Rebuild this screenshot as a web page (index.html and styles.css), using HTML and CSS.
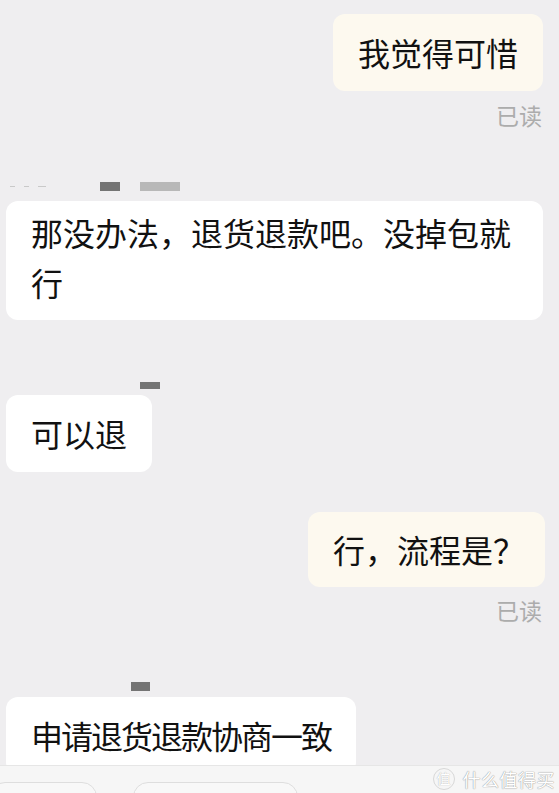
FILE: index.html
```html
<!DOCTYPE html>
<html lang="zh-CN">
<head>
<meta charset="utf-8">
<title>聊天</title>
<link rel="stylesheet" href="styles.css">
</head>
<body>
<div class="screen">
  <main class="chat">
    <div class="bubble bubble-out b1">我觉得可惜</div>
    <div class="read r1">已读</div>

    <div class="name n1">
      <span class="dots"><i></i><i></i><i></i></span>
      <span class="blk dark w20"></span>
      <span class="blk light w40"></span>
    </div>
    <div class="bubble bubble-in b2">那没办法，退货退款吧。没掉包就行</div>

    <div class="name n2"><span class="blk dark w20"></span></div>
    <div class="bubble bubble-in b3">可以退</div>

    <div class="bubble bubble-out b4">行，流程是？</div>
    <div class="read r2">已读</div>

    <div class="name n3"><span class="blk dark w19"></span></div>
    <div class="bubble bubble-in b5">申请退货退款协商一致</div>
  </main>
  <footer class="bar">
    <span class="pill pill-a"></span>
    <span class="pill pill-b"></span>
    <div class="mark"><span class="mark-ic">值</span><span class="mark-tx">什么值得买</span></div>
  </footer>
</div>
</body>
</html>
```

FILE: styles.css
```css
* { box-sizing: border-box; }
html, body { margin: 0; padding: 0; }
body {
  background: #efeef0;
  font-family: "Noto Sans CJK SC", "Noto Sans", sans-serif;
  color: #111;
}
.screen {
  width: 559px;
  height: 793px;
  display: flex;
  flex-direction: column;
  overflow: hidden;
}
.chat {
  flex: 1;
  min-height: 0;
  overflow: hidden;
  display: flex;
  flex-direction: column;
  align-items: flex-start;
}
.bubble {
  font-size: 32px;
  line-height: 49px;
  padding: 14px 25px;
  border-radius: 12px;
}
.bubble-in {
  background: #ffffff;
  margin-left: 6px;
  max-width: 537px;
}
.bubble-out {
  background: #fdf9ef;
  align-self: flex-end;
  margin-right: 16px;
}
.b1 { margin-top: 14px; }
.b2 { margin-top: 10px; line-height: 50px; padding: 6px 25px 13px; width: 537px; }
.b3 { margin-top: 6px; }
.b4 { margin-top: 40px; padding: 13px 20px 13px 25px; margin-right: 14px; }
.b5 { margin-top: 6px; letter-spacing: -2px; height: 110px; }

.read {
  align-self: flex-end;
  margin-right: 17px;
  font-size: 23px;
  line-height: 26px;
  color: #acacac;
}
.r1 { margin-top: 11px; }
.r2 { margin-top: 10px; }

.name {
  display: flex;
  align-items: flex-start;
  height: 9px;
}
.n1 { margin-top: 54px; margin-left: 10px; }
.n2 { margin-top: 62px; margin-left: 140px; height: 7px; }
.n3 { margin-top: 59px; margin-left: 131px; }
.dots { display: flex; gap: 9px; margin-top: 4px; width: 90px; }
.dots i { display: block; width: 5px; height: 1px; background: #c9c9c9; }
.dots i:last-child { width: 8px; }
.blk { display: block; height: 9px; }
.n2 .blk { height: 7px; }
.dark { background: #747474; }
.light { background: #b8b8b8; margin-left: 20px; }
.w20 { width: 20px; }
.w19 { width: 19px; }
.w40 { width: 40px; }

.bar {
  flex-shrink: 0;
  height: 28px;
  background: #f6f6f6;
  border-top: 1px solid #e6e6e6;
  position: relative;
  display: flex;
  align-items: flex-start;
  padding-top: 16px;
  overflow: hidden;
}
.pill {
  display: block;
  height: 30px;
  border: 1px solid #dedede;
  border-radius: 16px;
  background: #f8f8f8;
}
.pill-a { width: 107px; margin-left: -10px; }
.pill-b { width: 165px; margin-left: 36px; }
.mark {
  position: absolute;
  right: 4px;
  top: 2px;
  display: flex;
  align-items: center;
  gap: 8px;
}
.mark-ic {
  width: 22px;
  height: 22px;
  border-radius: 50%;
  border: 1.5px solid #d8d8d8;
  font-size: 14px;
  line-height: 19px;
  text-align: center;
  color: #fff;
  text-shadow: 0 0 1px #9a9a9a;
}
.mark-tx {
  font-size: 18px;
  line-height: 22px;
  color: #fff;
  text-shadow: 0 0 1px #9a9a9a, 0 0 1px #9a9a9a;
  letter-spacing: 0.5px;
}
```
